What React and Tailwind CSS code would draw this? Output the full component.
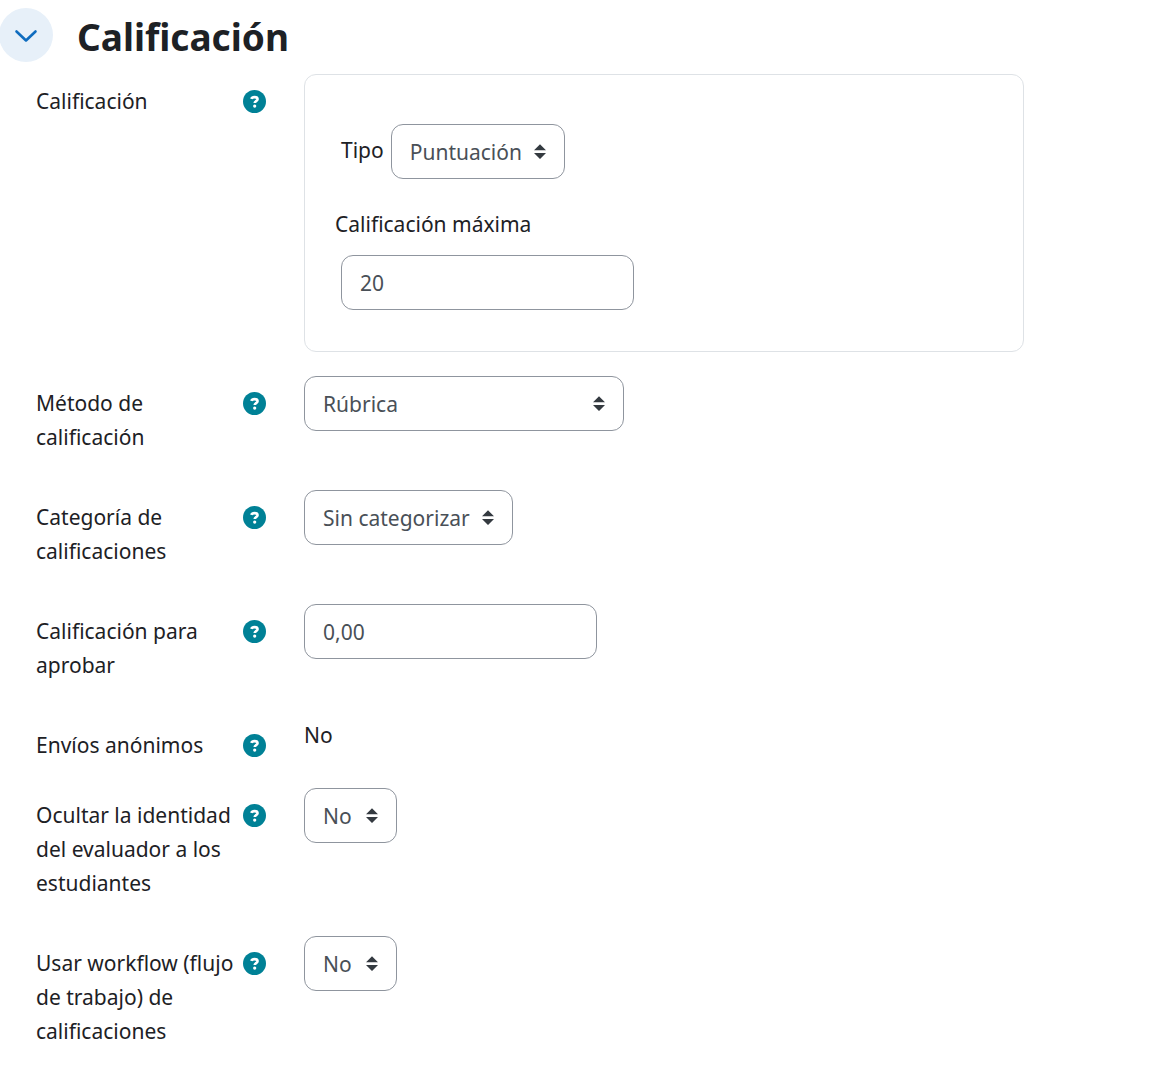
import { useState } from 'react';

const CONTROL = 'h-[55px] rounded-xl border border-[#8f959e] bg-white pl-[18px] text-[#495057]';

function HelpButton({ topic }) {
  return (
    <button type="button" aria-label={`Ayuda con ${topic}`} className="mt-1.5 size-[23px] shrink-0 rounded-full">
      <svg viewBox="0 0 24 24" className="size-[23px]" fill="none">
        <circle cx="12" cy="12" r="12" fill="#008196" />
        <path d="M8.7 9.3C9.2 7.9 10.3 7.4 12 7.4c2 0 3.2.8 3.2 2.3 0 2-3 1.9-3 3.9" stroke="#fff" strokeWidth="2.7" />
        <circle cx="12.2" cy="16.8" r="1.7" fill="#fff" />
      </svg>
    </button>
  );
}

function Select({ id, options, width }) {
  const [value, setValue] = useState(options[0]);
  return (
    <span className={`relative inline-block max-w-full ${width}`}>
      <select id={id} value={value} onChange={e => setValue(e.target.value)}
        className={`${CONTROL} w-full appearance-none pr-9`}>
        {options.map(o => <option key={o}>{o}</option>)}
      </select>
      <svg viewBox="0 0 12 16" className="pointer-events-none absolute top-5 right-[19px] h-4 w-3" fill="#343a40">
        <path d="M6 0.3 12 6.2H0zM6 15 0 9.1h12z" />
      </svg>
    </span>
  );
}

function Row({ label, htmlFor, labelPad = 'pb-3', children }) {
  return (
    <div className="mb-6 flex items-start gap-[38px]">
      <div className={`flex w-[230px] shrink-0 items-start justify-between pt-2.5 ${labelPad}`}>
        {htmlFor ? <label htmlFor={htmlFor} className="w-[204px]">{label}</label> : <p className="w-[204px]">{label}</p>}
        <HelpButton topic={label} />
      </div>
      <div className="min-w-0 flex-1">{children}</div>
    </div>
  );
}

export default function App() {
  const [open, setOpen]     = useState(true);
  const [maxima, setMaxima] = useState('20');
  const [aprobar, setAprobar] = useState('0,00');

  return (
    <main className="bg-white pt-2 font-['Noto_Sans',sans-serif] text-[21px] leading-[34px] text-[#1d2125]">
      <div className="-ml-px mb-3 flex items-center gap-6">
        <button type="button" aria-expanded={open} aria-label="Calificación" onClick={() => setOpen(!open)}
          className="flex size-[54px] items-center justify-center rounded-full bg-[#e7f0f9]">
          <svg viewBox="0 0 24 16" className="h-4 w-6" fill="none" stroke="#0f6cbf" strokeWidth="2.6" strokeLinecap="round" strokeLinejoin="round">
            <path d="M2.5 4.5 12 13.5l9.5-9" />
          </svg>
        </button>
        <h3 className="pt-1 text-[37px] leading-10 font-bold">Calificación</h3>
      </div>

      {open && (
        <form className="pr-6 pl-9">
          <Row label="Calificación">
            <fieldset aria-label="Calificación" className="max-w-[720px] rounded-xl border border-[#dee2e6] px-[30px] pt-[49px] pb-[41px]">
              <div className="flex items-center gap-[7px] pl-1.5">
                <label htmlFor="tipo" className="pb-1">Tipo</label>
                <Select id="tipo" width="w-[174px]" options={['Puntuación', 'Escala', 'Ninguno']} />
              </div>
              <label htmlFor="maxima" className="mt-7 mb-3.5 block">Calificación máxima</label>
              <div className="pl-1.5">
                <input id="maxima" type="text" value={maxima} onChange={e => setMaxima(e.target.value)}
                  className={`${CONTROL} block w-[293px]`} />
              </div>
            </fieldset>
          </Row>

          <Row label="Método de calificación" htmlFor="metodo">
            <Select id="metodo" width="w-[320px]" options={['Rúbrica', 'Guía de evaluación', 'Calificación simple directa']} />
          </Row>

          <Row label="Categoría de calificaciones" htmlFor="categoria">
            <Select id="categoria" width="w-[209px]" options={['Sin categorizar']} />
          </Row>

          <Row label="Calificación para aprobar" htmlFor="aprobar">
            <input id="aprobar" type="text" value={aprobar} onChange={e => setAprobar(e.target.value)}
              className={`${CONTROL} block w-[293px]`} />
          </Row>

          <Row label="Envíos anónimos" labelPad="pb-0.5">
            <p>No</p>
          </Row>

          <Row label="Ocultar la identidad del evaluador a los estudiantes" htmlFor="ocultar">
            <Select id="ocultar" width="w-[93px]" options={['No', 'Sí']} />
          </Row>

          <Row label="Usar workflow (flujo de trabajo) de calificaciones" htmlFor="workflow">
            <Select id="workflow" width="w-[93px]" options={['No', 'Sí']} />
          </Row>
        </form>
      )}
    </main>
  );
}
